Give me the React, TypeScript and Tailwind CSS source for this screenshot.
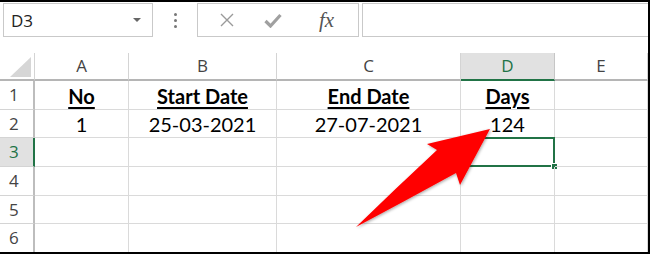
import React from 'react';

const cols = ['A', 'B', 'C', 'D', 'E'];
const rows: string[][] = [
  ['No', 'Start Date', 'End Date', 'Days', ''],
  ['1', '25-03-2021', '27-07-2021', '124', ''],
  ['', '', '', '', ''],
  ['', '', '', '', ''],
  ['', '', '', '', ''],
  ['', '', '', '', ''],
];

export default function App() {
  return (
    <div className="relative w-[650px] h-[254px] bg-white border-t-2 border-r-2 border-b-2 border-black overflow-hidden font-['Open_Sans',sans-serif]">
      {/* formula bar strip */}
      <div className="flex h-[34px] mt-[1px] pl-[3px]">
        <div className="w-[150px] border border-[#c9c9c9] flex items-center justify-between pl-[7px] pr-[11px]">
          <span className="text-[17px] text-[#222] leading-none">D3</span>
          <span className="w-0 h-0 border-l-[4px] border-r-[4px] border-t-[4px] border-l-transparent border-r-transparent border-t-[#666]" />
        </div>
        <div className="w-[44px] flex flex-col items-center justify-center gap-[3px]">
          <span className="w-[3px] h-[3px] rounded-full bg-[#777]" />
          <span className="w-[3px] h-[3px] rounded-full bg-[#777]" />
          <span className="w-[3px] h-[3px] rounded-full bg-[#777]" />
        </div>
        <div className="w-[162px] border border-[#c9c9c9] flex items-center">
          <svg width="14" height="14" viewBox="0 0 14 14" className="ml-[22px]">
            <path d="M1 1 L13 13 M13 1 L1 13" stroke="#9a9a9a" strokeWidth="1.4" />
          </svg>
          <svg width="18" height="15" viewBox="0 0 18 15" className="ml-[30px]">
            <path d="M1.5 8 L6.5 13 L16.5 2" stroke="#a0a0a0" strokeWidth="3.2" fill="none" />
          </svg>
          <span className="ml-[37px] font-['Liberation_Serif',serif] italic text-[21px] text-[#555] leading-none">fx</span>
        </div>
        <div className="flex-1 ml-[3px] border-t border-b border-l border-[#c9c9c9]" />
      </div>

      {/* grid */}
      <div className="mt-[16px] grid grid-cols-[35px_94px_148px_184px_94px_1fr] grid-rows-[28px_repeat(6,28.67px)]">
        <div className="relative border-r border-b-2 border-r-[#d4d4d4] border-b-[#b5b5b5]">
          <svg className="absolute right-[3px] bottom-[2px]" width="21" height="20" viewBox="0 0 21 20">
            <path d="M21 0 L21 20 L0 20 Z" fill="#d6d6d6" />
          </svg>
        </div>
        {cols.map(c => (
          <div
            key={c}
            className={
              c === 'D'
                ? 'flex items-center justify-center bg-[#e1e1e1] border-r border-r-[#c6c6c6] border-b-2 border-b-[#217346] text-[#217346] text-[17px]'
                : 'flex items-center justify-center border-r border-r-[#d4d4d4] border-b-2 border-b-[#b5b5b5] text-[#444] text-[17px]'
            }
          >
            {c}
          </div>
        ))}
        {rows.map((r, ri) => (
          <React.Fragment key={ri}>
            <div
              className={
                ri === 2
                  ? 'flex items-center pl-[9px] bg-[#e1e1e1] border-r-2 border-r-[#217346] border-b border-b-[#d4d4d4] text-[#217346] text-[17px]'
                  : 'flex items-center pl-[9px] border-r-2 border-r-[#bdbdbd] border-b border-b-[#d4d4d4] text-[#444] text-[17px]'
              }
            >
              {ri + 1}
            </div>
            {r.map((v, ci) => (
              <div
                key={ci}
                className={
                  "relative flex items-center justify-center pt-[2px] border-r border-b border-[#dadada] font-['Lato',sans-serif] text-[20px] text-black " +
                  (ri === 0 ? 'font-bold underline underline-offset-[3px] decoration-2' : '')
                }
              >
                {v}
                {ri === 2 && ci === 3 && (
                  <>
                    <div className="absolute -left-[1px] -top-[1px] -right-[1px] -bottom-[1px] border-2 border-[#217346]" />
                    <div className="absolute -right-[4px] -bottom-[4px] w-[7px] h-[7px] bg-[#217346] border border-white" />
                  </>
                )}
              </div>
            ))}
          </React.Fragment>
        ))}
      </div>

      {/* red arrow callout */}
      <svg className="absolute left-0 top-0 pointer-events-none" width="650" height="254" viewBox="0 0 650 254">
        <defs>
          <filter id="sh" x="-20%" y="-20%" width="140%" height="140%">
            <feDropShadow dx="1" dy="1" stdDeviation="1.5" floodColor="#000" floodOpacity="0.35" />
          </filter>
        </defs>
        <path
          d="M356 225 Q395 187 437 148 L427 142 L490 127 L460 183 L456 171 Q405 199 356 225 Z"
          fill="#ff0000"
          filter="url(#sh)"
        />
      </svg>
    </div>
  );
}
